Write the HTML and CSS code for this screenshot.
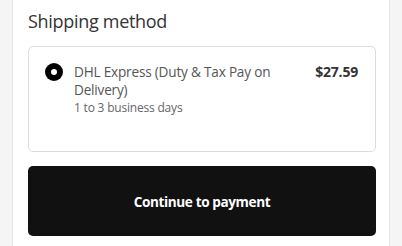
FILE: index.html
```html
<!DOCTYPE html>
<html>
<head>
<meta charset="utf-8">
<link rel="stylesheet" href="styles.css">
</head>
<body>
<div class="panel">
  <h2 class="title">Shipping method</h2>
  <div class="option">
    <span class="radio"><span class="dot"></span></span>
    <div class="info">
      <div class="name">DHL Express (Duty &amp; Tax Pay on Delivery)</div>
      <div class="days">1 to 3 business days</div>
    </div>
    <div class="price">$27.59</div>
  </div>
  <button class="continue">Continue to payment</button>
</div>
</body>
</html>
```
FILE: styles.css
```css
html, body {
  margin: 0;
  padding: 0;
  background: #f5f5f5;
  font-family: "Open Sans", "Noto Sans", sans-serif;
}
.panel {
  margin: 0 12px;
  height: 246px;
  box-sizing: border-box;
  background: #fff;
  border-left: 1px solid #e6e6e6;
  border-right: 1px solid #e6e6e6;
  padding: 0 13px 0 15px;
}
.title {
  margin: 0;
  padding-top: 9px;
  font-size: 18px;
  font-weight: 400;
  color: #333;
  line-height: 24px;
  letter-spacing: -0.3px;
}
.option {
  margin-top: 13px;
  height: 106px;
  box-sizing: border-box;
  border: 1px solid #dcdcdc;
  border-radius: 5px;
  display: flex;
  align-items: flex-start;
  padding: 17px 17px 0 16px;
}
.radio {
  width: 18px;
  height: 18px;
  border-radius: 50%;
  background: #000;
  display: flex;
  align-items: center;
  justify-content: center;
  flex: none;
  margin-top: -1px;
}
.dot {
  width: 6px;
  height: 6px;
  border-radius: 50%;
  background: #fff;
}
.info {
  flex: 1;
  margin-left: 11px;
  padding-right: 20px;
}
.name {
  font-size: 13.6px;
  line-height: 18px;
  color: #555;
  margin-top: -1px;
  letter-spacing: -0.2px;
}
.days {
  font-size: 12px;
  line-height: 16px;
  color: #666;
  margin-top: 1px;
  letter-spacing: -0.2px;
}
.price {
  font-size: 14px;
  line-height: 18px;
  font-weight: 700;
  color: #333;
  margin-top: -1px;
  letter-spacing: -0.2px;
}
.continue {
  display: block;
  width: 100%;
  margin-top: 14px;
  height: 70px;
  border: none;
  border-radius: 5px;
  background: #111;
  color: #fff;
  font-family: inherit;
  font-size: 13.6px;
  font-weight: 700;
  letter-spacing: -0.4px;
}
```
